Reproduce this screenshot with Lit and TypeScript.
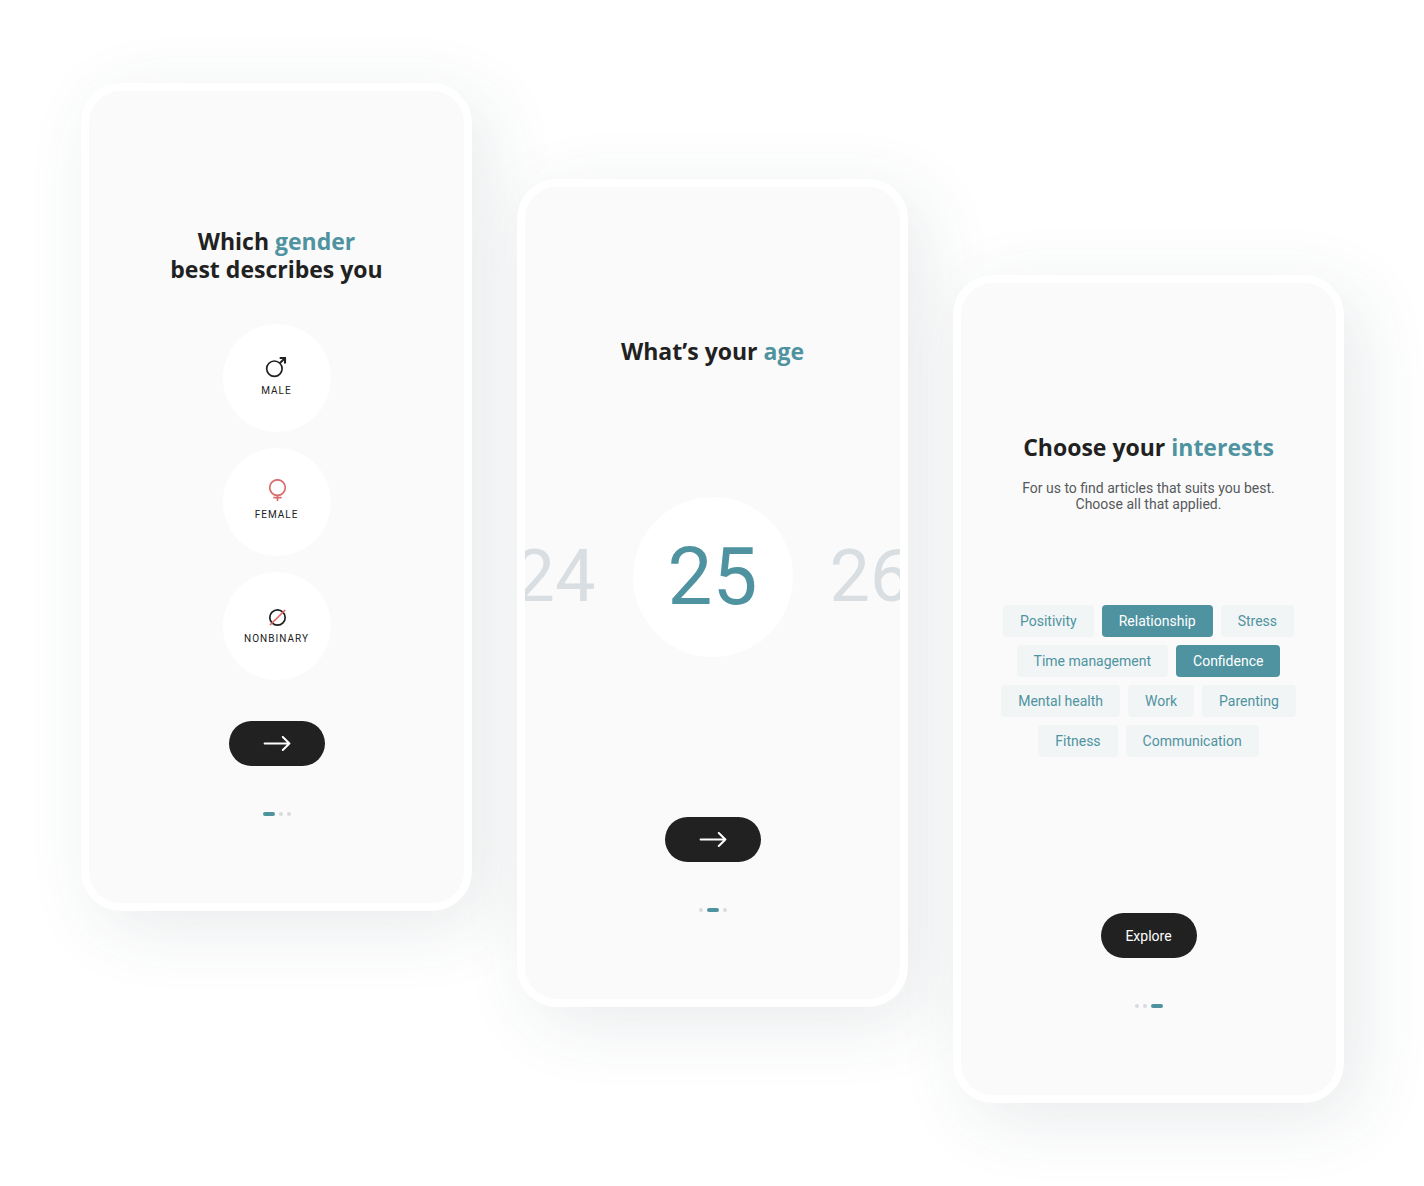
import { LitElement, html, css, svg } from "lit";
import { customElement, property, state } from "lit/decorators.js";
import { classMap } from "lit/directives/class-map.js";

const icons = {
  male: svg`
    <g stroke="#212121">
      <circle cx="9.4" cy="13.7" r="7.7" />
      <path d="M14.6 8.4L19.8 3.2" stroke-width="2" />
      <path d="M14.7 3H20V8.5" stroke-width="2.1" />
    </g>`,
  female: svg`
    <g stroke="#d96c6c">
      <circle cx="12.5" cy="8.6" r="7.8" />
      <path d="M12.5 16.4V22M8.3 18.6H16.7" />
    </g>`,
  nonbinary: svg`
    <g>
      <circle cx="12.5" cy="14.5" r="7.7" stroke="#212121" />
      <path d="M5 22L20.2 7" stroke="#e06666" />
    </g>`,
};

@customElement("step-dots")
class StepDots extends LitElement {
  @property({ type: Number }) current = 0;

  static styles = css`
    :host {
      display: flex;
      justify-content: center;
      gap: 4px;
    }
    .dot {
      width: 4px;
      height: 4px;
      border-radius: 2px;
      background: #d8dadb;
    }
    .active {
      width: 12px;
      background: #4f93a0;
    }
  `;

  render() {
    return [0, 1, 2].map(
      (i) => html`<span class=${classMap({ dot: true, active: i === this.current })}></span>`,
    );
  }
}

@customElement("phone-frame")
class PhoneFrame extends LitElement {
  @property({ type: Number }) step = 0;
  @property() action = "";

  static styles = css`
    :host {
      display: flex;
      flex-direction: column;
      box-sizing: border-box;
      min-width: 0;
      border: 8px solid #fff;
      border-radius: 40px;
      background: #fafafa;
      overflow: hidden;
      box-shadow: 16px 16px 72px rgba(47, 72, 80, 0.11);
    }
    .content {
      flex: 1;
      min-height: 630px;
    }
    .footer {
      display: flex;
      flex-direction: column;
      align-items: center;
      gap: 46px;
      padding-bottom: 87px;
    }
    .next {
      display: flex;
      align-items: center;
      justify-content: center;
      width: 96px;
      height: 45px;
      padding: 0;
      border: 0;
      border-radius: 23px;
      background: #212121;
      color: #fff;
      font: 14px/16px Roboto, sans-serif;
      cursor: pointer;
    }
    .arrow {
      width: 28px;
      height: 16px;
      fill: none;
      stroke: #fff;
      stroke-width: 2;
      stroke-linecap: round;
      stroke-linejoin: round;
    }
  `;

  render() {
    return html`
      <div class="content"><slot></slot></div>
      <div class="footer">
        <button class="next" type="button" aria-label=${this.action || "Next"}>
          ${this.action
            ? this.action
            : html`<svg class="arrow" viewBox="0 0 28 16" aria-hidden="true">
                <path d="M1.6 7.5H26.4M19.8 1L26.4 7.5L19.8 14" />
              </svg>`}
        </button>
        <step-dots .current=${this.step}></step-dots>
      </div>
    `;
  }
}

@customElement("app-root")
class AppRoot extends LitElement {
  @state() private selected = new Set(["Relationship", "Confidence"]);

  private interests = [
    "Positivity",
    "Relationship",
    "Stress",
    "Time management",
    "Confidence",
    "Mental health",
    "Work",
    "Parenting",
    "Fitness",
    "Communication",
  ];

  private genders = [
    { id: "male", label: "Male", icon: icons.male },
    { id: "female", label: "Female", icon: icons.female },
    { id: "nonbinary", label: "Nonbinary", icon: icons.nonbinary },
  ];

  static styles = css`
    :host {
      display: block;
      box-sizing: border-box;
      min-height: 100vh;
      background: #fff;
      color: #212121;
      font-family: Roboto, sans-serif;
      overflow: hidden;
    }
    .board {
      display: grid;
      grid-template-columns: repeat(3, minmax(0, 1fr));
      align-items: start;
      gap: 45px;
      padding: 83px 80px 83px 81px;
    }
    .second {
      margin-top: 96px;
    }
    .third {
      margin-top: 192px;
    }
    .title {
      margin: 0;
      padding-top: 150px;
      text-align: center;
      font: 700 23px/28px "Open Sans", sans-serif;
    }
    .first .title {
      padding-top: 136px;
    }
    .accent {
      color: #4f93a0;
    }
    .genders {
      display: flex;
      flex-direction: column;
      align-items: center;
      gap: 16px;
      margin: 41px 0 0;
      padding: 0;
      border: 0;
    }
    .gender {
      display: flex;
      flex-direction: column;
      align-items: center;
      gap: 6px;
      box-sizing: border-box;
      width: 108px;
      height: 108px;
      padding-top: 31px;
      border-radius: 50%;
      background: #fff;
      font-size: 10px;
      line-height: 12px;
      letter-spacing: 1px;
      text-transform: uppercase;
      cursor: pointer;
    }
    .gender:focus-within {
      outline: 2px solid #4f93a0;
    }
    .radio {
      position: absolute;
      margin: 0;
      opacity: 0;
    }
    .icon {
      width: 24px;
      height: 24px;
      fill: none;
      stroke-width: 1.7;
    }
    .ages {
      display: flex;
      align-items: center;
      justify-content: center;
      gap: 37px;
      margin-top: 132px;
      overflow: hidden;
    }
    .age {
      flex: none;
      padding: 0;
      border: 0;
      background: none;
      color: #d8dee2;
      font: 72px/84px Roboto, sans-serif;
      cursor: pointer;
    }
    .current {
      width: 160px;
      height: 160px;
      border-radius: 50%;
      background: #fff;
      color: #4f93a0;
      font-size: 80px;
    }
    .hint {
      margin: 19px 0 0;
      color: #55595c;
      text-align: center;
      font-size: 14px;
      line-height: 16px;
    }
    .chips {
      display: flex;
      flex-wrap: wrap;
      justify-content: center;
      gap: 8px;
      margin-top: 93px;
      padding: 0 36px;
    }
    .chip {
      height: 32px;
      padding: 0 17px;
      border: 0;
      border-radius: 4px;
      background: #f1f5f6;
      color: #4f93a0;
      font: 14px/16px Roboto, sans-serif;
      cursor: pointer;
    }
    .chip.on {
      background: #4f93a0;
      color: #fff;
    }
  `;

  private toggle(name: string) {
    const next = new Set(this.selected);
    if (!next.delete(name)) next.add(name);
    this.selected = next;
  }

  render() {
    return html`
      <main class="board">
        <phone-frame class="first" .step=${0}>
          <h2 class="title" id="gender-title">
            Which <span class="accent">gender</span><br />best describes you
          </h2>
          <fieldset class="genders" aria-labelledby="gender-title">
            ${this.genders.map(
              (g) => html`
                <label class="gender" for=${g.id}>
                  <input class="radio" type="radio" name="gender" id=${g.id} />
                  <svg class="icon" viewBox="0 0 24 24" aria-hidden="true">${g.icon}</svg>
                  <span>${g.label}</span>
                </label>
              `,
            )}
          </fieldset>
        </phone-frame>

        <phone-frame class="second" .step=${1}>
          <h2 class="title">What’s your <span class="accent">age</span></h2>
          <div class="ages">
            <button class="age" type="button">24</button>
            <button class="age current" type="button" aria-pressed="true">25</button>
            <button class="age" type="button">26</button>
          </div>
        </phone-frame>

        <phone-frame class="third" .step=${2} action="Explore">
          <h2 class="title">Choose your <span class="accent">interests</span></h2>
          <p class="hint">
            For us to find articles that suits you best.<br />Choose all that applied.
          </p>
          <div class="chips">
            ${this.interests.map(
              (name) => html`
                <button
                  class=${classMap({ chip: true, on: this.selected.has(name) })}
                  type="button"
                  aria-pressed=${this.selected.has(name)}
                  @click=${() => this.toggle(name)}
                >
                  ${name}
                </button>
              `,
            )}
          </div>
        </phone-frame>
      </main>
    `;
  }
}
